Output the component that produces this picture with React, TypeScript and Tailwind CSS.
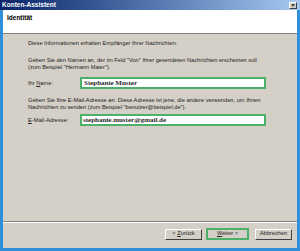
export default function App() {
  return (
    <div className="w-[300px] h-[251px] bg-[#2f8fd8] px-[3px] pb-[3px] flex flex-col overflow-hidden font-['Liberation_Sans',sans-serif]">
      {/* Titelleiste */}
      <div className="shrink-0 h-[10px] -mx-[3px] flex items-center justify-between pl-[2px] pr-[3px] bg-gradient-to-r from-[#0a246a] to-[#a6caf0] text-[6.5px] leading-none">
        <span className="font-bold text-white">Konten-Assistent</span>
        <span className="w-[8px] h-[7px] bg-[#d4d0c8] border border-t-white border-l-white border-r-[#404040] border-b-[#404040] flex items-center justify-center font-bold text-black text-[6px]">
          ×
        </span>
      </div>

      {/* Kopfbereich */}
      <div className="shrink-0 h-[24px] bg-white border-b border-[#808080] flex items-start pl-[4px] pt-[4px]">
        <span className="block text-[6.5px] leading-[7px] font-bold text-black">Identität</span>
      </div>

      {/* Inhalt */}
      <div className="flex-1 bg-[#d4d0c8] flex flex-col text-[5.7px] leading-[7px] text-[#222]">
        <div className="flex-1 pl-[25px] pr-[6px] pt-[6px]">
          <p>Diese Informationen erhalten Empfänger Ihrer Nachrichten.</p>

          <p className="mt-[10px]">
            Geben Sie den Namen an, der im Feld "Von" Ihrer gesendeten Nachrichten erscheinen soll
            <br />
            (zum Beispiel "Hermann Maier").
          </p>

          <div className="flex items-center mt-[6px]">
            <span className="w-[52px]">
              Ihr <u>N</u>ame:
            </span>
            <div className="w-[186px] h-[12px] bg-white border-2 border-[#4caf6a] flex items-center pl-[2px] font-['Liberation_Serif',serif] font-bold text-[7px] text-[#2a2a2a]">
              Stephanie Muster
            </div>
          </div>

          <p className="mt-[8px]">
            Geben Sie Ihre E-Mail-Adresse an. Diese Adresse ist jene, die andere verwenden, um Ihnen
            <br />
            Nachrichten zu senden (zum Beispiel "benutzer@beispiel.de").
          </p>

          <div className="flex items-center mt-[3px]">
            <span className="w-[52px]">
              <u>E</u>-Mail-Adresse:
            </span>
            <div className="w-[186px] h-[12px] bg-white border-2 border-[#4caf6a] flex items-center pl-[1px] font-['Liberation_Serif',serif] font-bold text-[7px] text-[#2a2a2a]">
              stephanie.muster@gmail.de
            </div>
          </div>
        </div>

        {/* Knopfleiste */}
        <div className="border-t border-t-[#808080] shadow-[inset_0_1px_0_#ffffff] h-[27px] flex items-center justify-end gap-[4px] pr-[5px] pb-[2px]">
          <button className="w-[37px] h-[11px] bg-[#d4d0c8] border border-t-white border-l-white border-r-[#404040] border-b-[#404040] text-[5.7px] leading-none">
            &lt; <u>Z</u>urück
          </button>
          <button className="w-[43px] h-[12px] bg-[#d4d0c8] border-2 border-[#4caf6a] text-[5.7px] leading-none">
            <u>W</u>eiter &gt;
          </button>
          <button className="ml-[2px] w-[37px] h-[11px] bg-[#d4d0c8] border border-t-white border-l-white border-r-[#404040] border-b-[#404040] text-[5.7px] leading-none">
            Abbrechen
          </button>
        </div>
      </div>
    </div>
  );
}
